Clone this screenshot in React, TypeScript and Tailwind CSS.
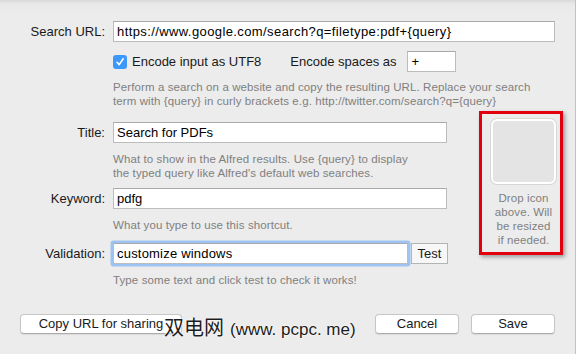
import type { ReactNode } from "react";

const ui = { fontFamily: '"Liberation Sans", Arial, sans-serif' };

const Field = ({ text, className = "" }: { text: string; className?: string }) => (
    <div className={`flex h-[21px] items-center border border-[#bcbcbc] border-t-[#a9a9a9] bg-white pl-[3px] text-[13px] text-black ${className}`}>
        {text}
    </div>
);

const Row = ({ label, children }: { label?: string; children: ReactNode }) => (
    <div className="flex items-center">
        <div className="w-[105px] shrink-0 text-right text-[13px] text-[#1a1a1a]">{label}</div>
        <div className="ml-2 flex items-center">{children}</div>
    </div>
);

const Help = ({ children, className = "" }: { children: ReactNode; className?: string }) => (
    <div className={`ml-[113px] text-[11.5px] leading-[14px] tracking-[0.1px] text-[#808080] ${className}`}>{children}</div>
);

const Button = ({ label, className = "" }: { label: string; className?: string }) => (
    <div className={`flex h-[20px] items-center justify-center rounded-[4px] border border-[#c6c6c6] border-b-[#acacac] bg-white text-[13px] text-[#1a1a1a] shadow-[0_1px_1px_rgba(0,0,0,0.08)] ${className}`}>
        {label}
    </div>
);

export default function App() {
    return (
        <div
            style={ui}
            className="relative h-[354px] w-[576px] overflow-hidden border-r border-[#c2c2c2] bg-[linear-gradient(to_bottom,#d9d9d9_0px,#e9e9e9_4px,#ececec_14px)]"
        >
            <div className="pt-[21px]">
                <Row label="Search URL:">
                    <Field text="https://www.google.com/search?q=filetype:pdf+{query}" className="w-[442px] tracking-[0.4px]" />
                </Row>

                <div className="mt-[9px] flex h-[21px] items-center pl-[113px] text-[13px] text-[#1a1a1a]">
                    <div className="flex h-[14px] w-[14px] items-center justify-center rounded-[3px] bg-[#3d98fc]">
                        <svg width="10" height="10" viewBox="0 0 10 10" fill="none">
                            <path d="M2 5.3 L4.2 7.6 L8.2 1.8" stroke="white" strokeWidth="1.6" strokeLinecap="round" strokeLinejoin="round" />
                        </svg>
                    </div>
                    <span className="ml-[5px]">Encode input as UTF8</span>
                    <span className="ml-[29px]">Encode spaces as</span>
                    <Field text="+" className="ml-[10px] w-[49px] pl-[4px]" />
                </div>

                <Help className="mt-[8px]">
                    Perform a search on a website and copy the resulting URL. Replace your search
                    <br />
                    term with {"{query}"} in curly brackets e.g. http://twitter.com/search?q={"{query}"}
                </Help>

                <div className="flex">
                    <div className="w-[447px] pt-[14px]">
                        <Row label="Title:">
                            <Field text="Search for PDFs" className="w-[334px]" />
                        </Row>
                        <Help className="mt-[9px]">
                            What to show in the Alfred results. Use {"{query}"} to display
                            <br />
                            the typed query like Alfred's default web searches.
                        </Help>

                        <div className="mt-[8px]">
                            <Row label="Keyword:">
                                <Field text="pdfg" className="w-[334px]" />
                            </Row>
                        </div>
                        <Help className="mt-[9px]">What you type to use this shortcut.</Help>

                        <div className="mt-[11px]">
                            <Row label="Validation:">
                                <Field
                                    text="customize windows"
                                    className="w-[295px] rounded-[1px] border-[#86b3ea] tracking-[0.2px] shadow-[0_0_0_2.5px_#9cc3f1]"
                                />
                                <div className="ml-[3px] flex h-[21px] w-[37px] items-center justify-center border border-[#b4b4b4] bg-[#f7f7f7] text-[13px] text-[#1a1a1a]">
                                    Test
                                </div>
                            </Row>
                        </div>
                        <Help className="mt-[9px]">Type some text and click test to check it works!</Help>
                    </div>

                    <div className="ml-[32px] mt-[3px] flex h-[144px] w-[84px] flex-col items-center border-[3px] border-[#e2000c] pl-[5px] pt-[5px] shadow-[2px_2px_4px_rgba(0,0,0,0.35)]">
                        <div className="h-[65px] w-[65px] rounded-[6px] border-2 border-white bg-[#e4e4e4] shadow-[0_0_0_1px_#d6d6d6]" />
                        <div className="mt-[7px] text-center text-[11.5px] leading-[14px] tracking-[0.1px] text-[#7f7f7f]">
                            Drop icon
                            <br />
                            above. Will
                            <br />
                            be resized
                            <br />
                            if needed.
                        </div>
                    </div>
                </div>

                <div className="mt-[27px] flex items-center pl-[20px] pr-[20px]">
                    <Button label="Copy URL for sharing" className="w-[162px]" />
                    <div className="flex-1" />
                    <Button label="Cancel" className="w-[84px]" />
                    <Button label="Save" className="ml-[12px] w-[84px]" />
                </div>
            </div>

            <div className="absolute left-[164px] top-[314px] flex items-baseline text-[#1c1c1c] [text-shadow:0_0_2px_#fff,0_0_2px_#fff]">
                <span
                    className="text-[20px] leading-[26px]"
                    style={{ fontFamily: '"Noto Sans CJK SC", "Liberation Sans", sans-serif' }}
                >
                    双电网
                </span>
                <span className="ml-[6px] text-[17px] leading-[26px]">(www. pcpc. me)</span>
            </div>
        </div>
    );
}
